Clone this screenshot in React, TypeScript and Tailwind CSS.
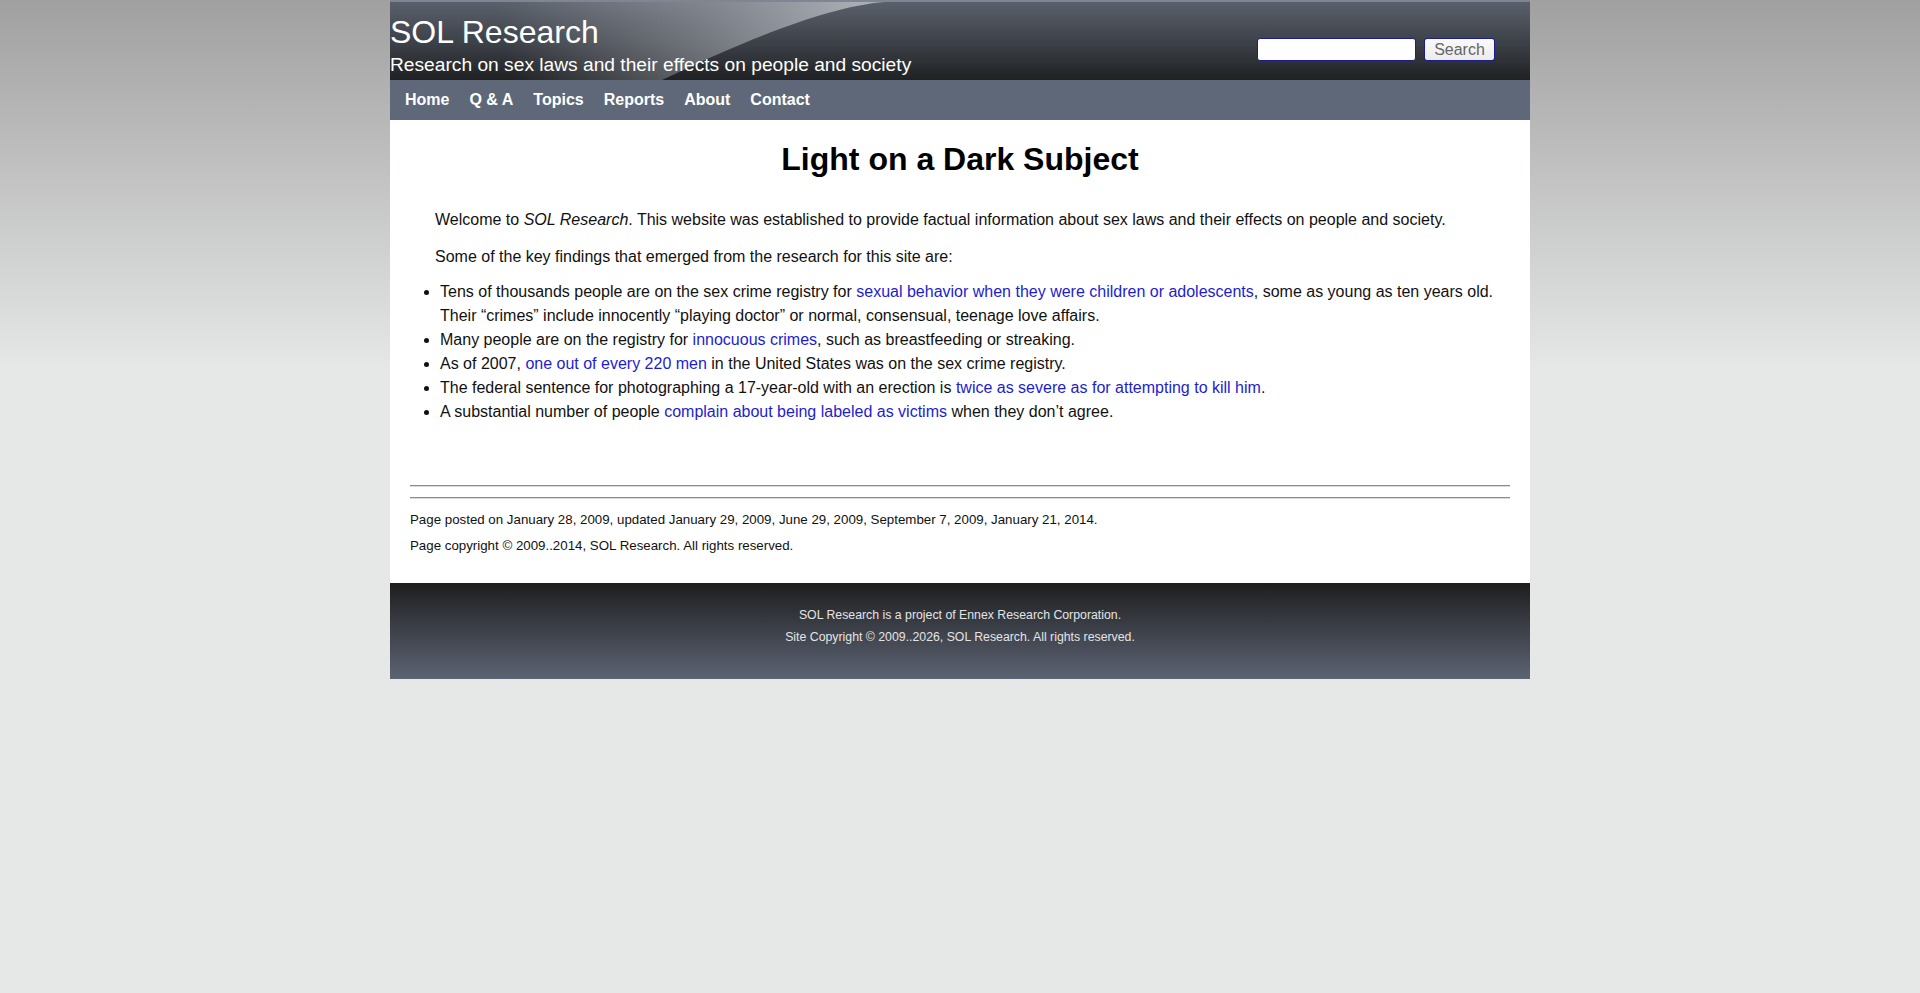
import React from 'react';

const navItems = ['Home', 'Q & A', 'Topics', 'Reports', 'About', 'Contact'];

function HeaderSwoosh() {
  return (
    <svg
      className="pointer-events-none absolute inset-0"
      width="1140"
      height="78"
      viewBox="0 0 1140 78"
      preserveAspectRatio="none"
    >
      <defs>
        <linearGradient id="glow" x1="120" y1="70" x2="470" y2="0" gradientUnits="userSpaceOnUse">
          <stop offset="0" stopColor="#9ea2a9" stopOpacity="0" />
          <stop offset="0.55" stopColor="#9ea2a9" stopOpacity="0.55" />
          <stop offset="1" stopColor="#a9adb4" stopOpacity="1" />
        </linearGradient>
      </defs>
      <path d="M0 0 L495 0 C440 4 360 36 272 78 L0 78 Z" fill="url(#glow)" />
    </svg>
  );
}

function Header() {
  return (
    <div className="relative flex h-[80px] justify-between border-t-2 border-[#7f8592] bg-[linear-gradient(to_bottom,#5a606b,#3b3f46_55%,#1f2123)]">
      <HeaderSwoosh />
      <div className="relative">
        <div className="mt-[12px] text-[32px] leading-[37px] text-white">SOL Research</div>
        <div className="mt-[3px] text-[19.2px] leading-[22px] text-white">
          Research on sex laws and their effects on people and society
        </div>
      </div>
      <div className="relative flex items-start gap-[8px] pr-[35px] pt-[36px]">
        <input
          type="text"
          className="h-[23px] w-[159px] rounded-[3px] border border-[#1c1c8c] bg-white px-1 outline-none"
        />
        <button className="h-[23px] w-[71px] rounded-[3px] border border-[#1c1c8c] bg-[linear-gradient(to_bottom,#fafafa,#ececec)] text-[16px] leading-[20px] text-[#666]">
          Search
        </button>
      </div>
    </div>
  );
}

function Nav() {
  return (
    <div className="flex h-[40px] items-center gap-[20px] bg-[#5f6878] pl-[15px]">
      {navItems.map((item) => (
        <a key={item} className="text-[16px] font-bold text-white">
          {item}
        </a>
      ))}
    </div>
  );
}

function Link({ children }: { children: React.ReactNode }) {
  return <a className="text-[#1d1dcf]">{children}</a>;
}

function Content() {
  return (
    <div className="bg-white px-[20px] pb-[29px] pt-[19px] text-[#111]">
      <h1 className="text-center text-[32px] font-bold leading-[40px] text-black">Light on a Dark Subject</h1>
      <p className="mx-[25px] mt-[30px] text-[16px] leading-[21px]">
        Welcome to <i>SOL Research</i>. This website was established to provide factual information about sex
        laws and their effects on people and society.
      </p>
      <p className="mx-[25px] mt-[16px] text-[16px] leading-[21px]">
        Some of the key findings that emerged from the research for this site are:
      </p>
      <ul className="mt-[13px] list-disc pl-[30px] text-[16px] leading-[24px]">
        <li>
          Tens of thousands people are on the sex crime registry for{' '}
          <Link>sexual behavior when they were children or adolescents</Link>, some as young as ten years old.
          Their “crimes” include innocently “playing doctor” or normal, consensual, teenage love affairs.
        </li>
        <li>
          Many people are on the registry for <Link>innocuous crimes</Link>, such as breastfeeding or streaking.
        </li>
        <li>
          As of 2007, <Link>one out of every 220 men</Link> in the United States was on the sex crime registry.
        </li>
        <li>
          The federal sentence for photographing a 17-year-old with an erection is{' '}
          <Link>twice as severe as for attempting to kill him</Link>.
        </li>
        <li>
          A substantial number of people <Link>complain about being labeled as victims</Link> when they don’t
          agree.
        </li>
      </ul>
      <div className="mt-[61px] border-t border-b border-t-[#8a8a8a] border-b-[#dcdcdc]" />
      <div className="mt-[10px] border-t border-b border-t-[#8a8a8a] border-b-[#dcdcdc]" />
      <p className="mt-[12px] text-[13.3px] leading-[17px]">
        Page posted on January 28, 2009, updated January 29, 2009, June 29, 2009, September 7, 2009, January
        21, 2014.
      </p>
      <p className="mt-[9px] text-[13.3px] leading-[17px]">
        Page copyright © 2009..2014, SOL Research. All rights reserved.
      </p>
    </div>
  );
}

function Footer() {
  return (
    <div className="h-[96px] bg-[linear-gradient(to_bottom,#1e1e1f,#3a3e46_45%,#5c6372)] pt-[24px] text-center text-[12.3px] leading-[16px] text-[#e4e4e4]">
      <p>SOL Research is a project of Ennex Research Corporation.</p>
      <p className="mt-[6px]">Site Copyright © 2009..2026, SOL Research. All rights reserved.</p>
    </div>
  );
}

export default function App() {
  return (
    <div className="min-h-screen bg-[#e6e8e7] bg-[linear-gradient(to_bottom,#a0a0a0_0px,#e6e8e7_370px)] font-['Liberation_Sans',Arial,sans-serif]">
      <div className="mx-auto w-[1140px]">
        <Header />
        <Nav />
        <Content />
        <Footer />
      </div>
    </div>
  );
}
